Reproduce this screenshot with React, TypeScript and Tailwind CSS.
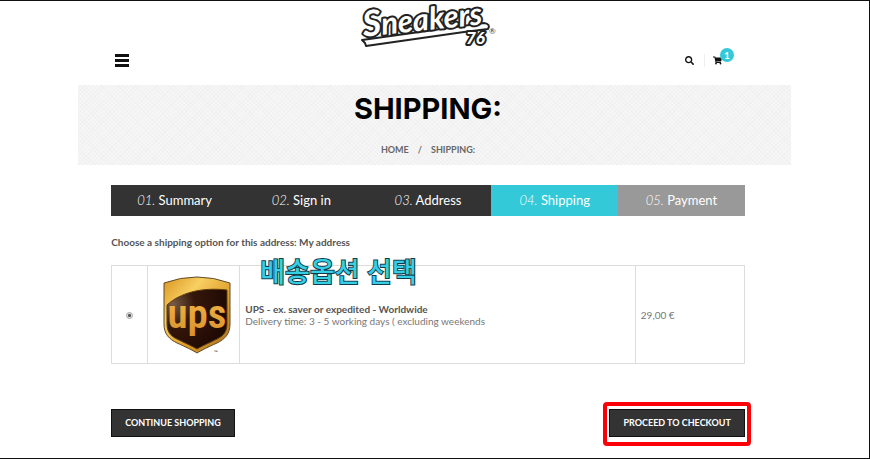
import { FaSearch, FaShoppingCart } from 'react-icons/fa'

const steps = [
  { number: '01.', label: 'Summary', tone: 'bg-[#333333]' },
  { number: '02.', label: 'Sign in', tone: 'bg-[#333333]' },
  { number: '03.', label: 'Address', tone: 'bg-[#333333]' },
  { number: '04.', label: 'Shipping', tone: 'bg-[#34c9d9]', current: true },
  { number: '05.', label: 'Payment', tone: 'bg-[#999999]' },
]

function SneakersLogo() {
  return (
    <svg
      width={140}
      height={48}
      viewBox="0 0 140 48"
      role="img"
      aria-label="Sneakers 76"
      strokeLinejoin="round"
      strokeLinecap="round"
      className="overflow-visible"
    >
      <path d="M4 37 L126 20 Q133 21 130 26 L106 29 L8 43 L7 40 Z" fill="#fff" stroke="#222" strokeWidth={2} />
      <g
        transform="rotate(-6 70 24)"
        fontFamily="Lato, sans-serif"
        fontStyle="italic"
        fontWeight={700}
        fill="#fff"
        stroke="#222"
        strokeWidth={4}
        paintOrder="stroke"
      >
        <text x={5} y={27} fontSize={36}>
          S<tspan fontSize={31}>neakers</tspan>
        </text>
      </g>
      <text
        x={108}
        y={41}
        fontSize={17}
        fontWeight={900}
        fontStyle="italic"
        fontFamily="Lato, sans-serif"
        fill="#fff"
        stroke="#222"
        strokeWidth={4}
        paintOrder="stroke"
      >
        76
      </text>
      <text x={131} y={31} fontSize={8} fontFamily="Lato, sans-serif" fill="#333">®</text>
    </svg>
  )
}

function UpsLogo() {
  return (
    <svg width={68} height={80} viewBox="0 0 68 80" role="img" aria-label="UPS">
      <defs>
        <linearGradient id="gold" x1="0" y1="0" x2="1" y2="1">
          <stop offset="0" stopColor="#d9951f" />
          <stop offset="0.3" stopColor="#f8cf62" />
          <stop offset="0.6" stopColor="#e0a02c" />
          <stop offset="1" stopColor="#a86b14" />
        </linearGradient>
        <radialGradient id="brown" cx="0.1" cy="0.25" r="0.9">
          <stop offset="0" stopColor="#765b46" />
          <stop offset="0.4" stopColor="#35170a" />
          <stop offset="1" stopColor="#200a04" />
        </radialGradient>
        <linearGradient id="letters" x1="0" y1="0" x2="0" y2="1">
          <stop offset="0" stopColor="#f3bb4a" />
          <stop offset="1" stopColor="#d98f2b" />
        </linearGradient>
      </defs>
      <path
        d="M1 8 Q34 -4 67 8 V49 C67 59 62 64 54 68 C45 72 39 75 34 78 C29 75 23 72 14 68 C6 64 1 59 1 49 Z"
        fill="url(#gold)"
        stroke="#604a28"
        strokeWidth={1}
      />
      <path
        d="M4 30 C17 18 38 12 64 15 V49 C64 58 59 62 52 65 C44 69 39 71 34 74 C29 71 24 69 16 65 C9 62 4 58 4 49 Z"
        fill="url(#brown)"
        stroke="#5d3e14"
        strokeWidth={1}
      />
      <text
        x={34}
        y={53}
        textAnchor="middle"
        fontSize={41}
        fontWeight={600}
        fontFamily="'Roboto Condensed', 'Open Sans Condensed', Lato, sans-serif"
        fill="url(#letters)"
      >
        ups
      </text>
      <text x={51} y={79} fontSize={5} fontFamily="Lato, sans-serif" fill="#333">™</text>
    </svg>
  )
}

function MenuIcon() {
  return (
    <svg width={14} height={13} viewBox="0 0 14 13" fill="currentColor" aria-hidden>
      <rect width={14} height={3} />
      <rect y={5} width={14} height={3} />
      <rect y={10} width={14} height={3} />
    </svg>
  )
}

function Header() {
  return (
    <header className="grid h-[84px] grid-cols-3 items-start pl-[33px] pr-[46px]">
      <button type="button" aria-label="Menu" className="mt-[53px] justify-self-start pl-1 text-[#111]">
        <MenuIcon />
      </button>
      <a href="#home" className="mt-[2px] justify-self-center">
        <SneakersLogo />
      </a>
      <div className="mr-[10px] mt-[53px] flex items-center justify-self-end text-[#111]">
        <button type="button" aria-label="Search" className="pr-[10px]">
          <FaSearch size={9} />
        </button>
        <a href="#cart" aria-label="Cart" className="relative border-l border-[#eeeeee] py-[2px] pl-2 pr-[13px]">
          <FaShoppingCart size={9} />
          <span className="absolute -top-[6px] right-px flex size-[14px] items-center justify-center rounded-full bg-[#34c9d9] text-[10px] font-bold leading-none text-white">
            1
          </span>
        </a>
      </div>
    </header>
  )
}

function PageTitle() {
  return (
    <section className="flex h-20 flex-col items-center bg-[#f6f6f6] bg-[repeating-linear-gradient(45deg,#00000004_0_1px,transparent_1px_3px),repeating-linear-gradient(-45deg,#00000004_0_1px,transparent_1px_3px)] pr-[13px] pt-2">
      <h1 className="font-['Inter',sans-serif] text-[29px] font-bold leading-8 text-black">SHIPPING:</h1>
      <nav aria-label="Breadcrumb" className="mt-[17px] flex gap-[9px] text-[9px] font-bold leading-4 text-[#666]">
        <a href="#home">HOME</a>
        <span>/</span>
        <span>SHIPPING:</span>
      </nav>
    </section>
  )
}

function Steps() {
  return (
    <ol className="flex text-[13px] leading-[31px] text-white">
      {steps.map((step) => (
        <li
          key={step.number}
          aria-current={step.current ? 'step' : undefined}
          className={`flex-1 text-center ${step.tone}`}
        >
          <em className="font-light">{step.number}</em> {step.label}
        </li>
      ))}
    </ol>
  )
}

function ShippingOptions() {
  return (
    <div className="relative mt-[15px]">
      <table className="w-full border-collapse text-[10px] leading-3 text-[#777]">
        <tbody>
          <tr className="h-[98px]">
            <td className="w-[36px] border border-[#dddddd] text-center">
              <input
                type="radio"
                id="ups"
                name="carrier"
                defaultChecked
                className="size-[7px] appearance-none rounded-full border border-[#aaa] bg-white align-middle checked:bg-[radial-gradient(#555_35%,#ddd_50%)]"
              />
            </td>
            <td className="w-[92px] border border-[#dddddd] pl-[6px]">
              <div className="flex justify-center">
                <UpsLogo />
              </div>
            </td>
            <td className="border border-[#dddddd] px-[5px]">
              <label htmlFor="ups" className="block">
                <strong className="block font-bold text-[#555]">UPS - ex. saver or expedited - Worldwide</strong>
                Delivery time: 3 - 5 working days ( excluding weekends
              </label>
            </td>
            <td className="w-[109px] border border-[#dddddd] px-[5px]">29,00 €</td>
          </tr>
        </tbody>
      </table>
      <p
        lang="ko"
        className="absolute -top-3 left-[149px] whitespace-nowrap font-['Noto_Sans_CJK_KR',sans-serif] text-[27px] font-medium leading-9 text-[#35cfe5] [-webkit-text-stroke:2px_#123c4a] [paint-order:stroke]"
      >
        배송옵션 선택
      </p>
    </div>
  )
}

export default function App() {
  return (
    <div className="min-h-screen border-y border-r border-[#111] bg-white font-['Lato',sans-serif]">
      <div className="mx-[9%]">
        <Header />
        <PageTitle />
        <main className="pb-5 pl-[33px] pr-[46px] pt-5">
          <Steps />
          <h2 className="mt-[18px] text-[10px] font-bold leading-4 text-[#555]">
            Choose a shipping option for this address: My address
          </h2>
          <ShippingOptions />
          <div className="mt-[45px] flex items-center justify-between text-[9px] font-bold leading-[26px] text-white">
            <button type="button" className="border border-[#111] bg-[#333333] px-[13px]">
              CONTINUE SHOPPING
            </button>
            <div className="relative">
              <button type="button" className="block border border-[#111] bg-[#333333] px-[13px]">
                PROCEED TO CHECKOUT
              </button>
              <span className="pointer-events-none absolute -inset-x-[6px] -bottom-[9px] -top-[7px] rounded-[4px] border-4 border-[#fb0007]" />
            </div>
          </div>
        </main>
      </div>
    </div>
  )
}
